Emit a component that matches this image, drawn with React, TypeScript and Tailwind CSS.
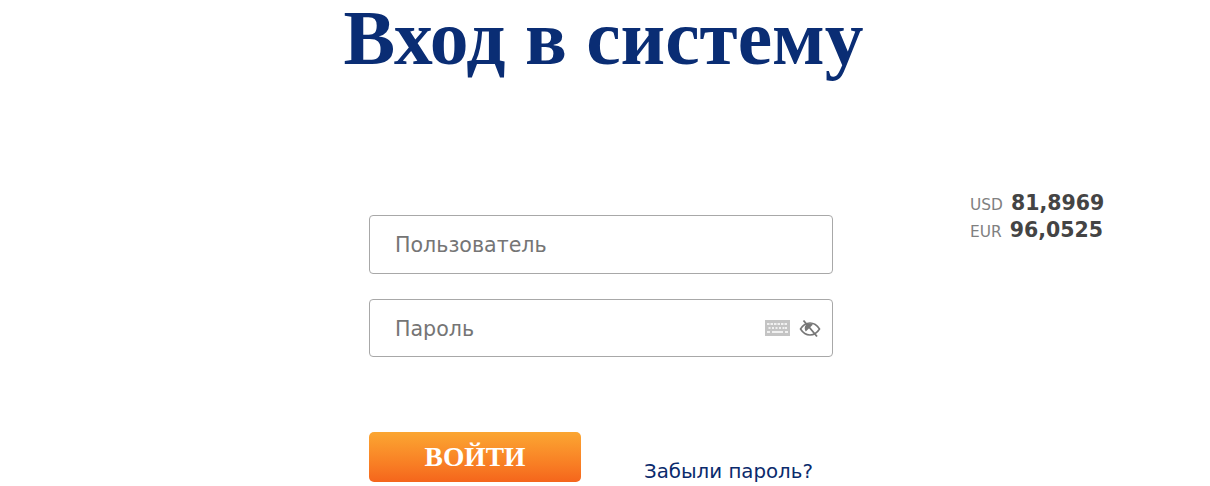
import React from "react";

function Keyboard() {
  return (
    <svg width="25" height="16" viewBox="0 0 25 16" className="block">
      <rect x="0" y="0" width="25" height="16" fill="#c4c4c4" />
      <g fill="#f0f0f0">
        {[2, 5.5, 9, 12.5, 16, 19.5].map((x) => (
          <rect key={x} x={x} y="3" width="2.5" height="2" />
        ))}
        {[3.5, 7, 10.5, 14, 17.5, 20].map((x) => (
          <rect key={x} x={x} y="7" width="2" height="2" />
        ))}
        <rect x="2" y="11" width="3" height="2" />
        <rect x="7" y="11" width="11" height="2" />
        <rect x="20" y="11" width="3" height="2" />
      </g>
    </svg>
  );
}

function EyeOff() {
  return (
    <svg width="22" height="20" viewBox="0 0 22 20" fill="none" className="block">
      <path d="M1.5 11C4 7 7.2 5 11 5s7 2 9.5 6c-2.5 4-5.7 6-9.5 6s-7-2-9.5-6Z" stroke="#777" strokeWidth="1.6" />
      <path d="M8 6C5.5 7.5 5 11 6.8 13.5L14 6.5C12 5.5 10 5.3 8 6Z" fill="#777" />
      <path d="M4.5 2.5l13.5 16" stroke="#777" strokeWidth="1.8" />
    </svg>
  );
}

export default function App() {
  const sans = "font-['DejaVu_Sans',Verdana,sans-serif]";
  return (
    <div className={`h-[486px] w-[1210px] overflow-hidden bg-white ${sans}`}>
      <h1 className="pr-[3px] text-center font-['Liberation_Serif',serif] text-[77.5px] font-bold leading-[76px] text-[#0a2d74]">
        Вход в систему
      </h1>
      <div className="mt-[139px] flex pl-[369px]">
        <div className="w-[464px]">
          <div className="flex h-[59px] items-center rounded-[4px] border border-[#a8a8a8] pl-[25px] pt-[2px] text-[20.6px] text-[#757575]">
            Пользователь
          </div>
          <div className="mt-[25px] flex h-[58px] items-center justify-between rounded-[4px] border border-[#a8a8a8] pl-[25px] pr-[11px] text-[20.6px] text-[#757575]">
            <span className="pt-[2px]">Пароль</span>
            <span className="flex items-center gap-[9px]">
              <Keyboard />
              <EyeOff />
            </span>
          </div>
          <div className="mt-[75px] flex items-start">
            <button className="h-[50px] w-[212px] rounded-[5px] bg-gradient-to-b from-[#fba632] to-[#f5651c] font-['Liberation_Serif',serif] text-[27.5px] font-bold leading-[48px] text-white">
              ВОЙТИ
            </button>
            <a className="ml-[63px] mt-[28px] text-[19.8px] leading-[24px] text-[#0a2a6c]">Забыли пароль?</a>
          </div>
        </div>
        <div className="ml-[137px] -mt-[27px] text-[#444444]">
          <div className="flex h-[27px] items-baseline gap-[8px]">
            <span className="text-[15.4px] text-[#808080]">USD</span>
            <span className="text-[20.5px] font-bold">81,8969</span>
          </div>
          <div className="flex h-[28px] items-baseline gap-[8px]">
            <span className="text-[15.4px] text-[#808080]">EUR</span>
            <span className="text-[20.5px] font-bold">96,0525</span>
          </div>
        </div>
      </div>
    </div>
  );
}
